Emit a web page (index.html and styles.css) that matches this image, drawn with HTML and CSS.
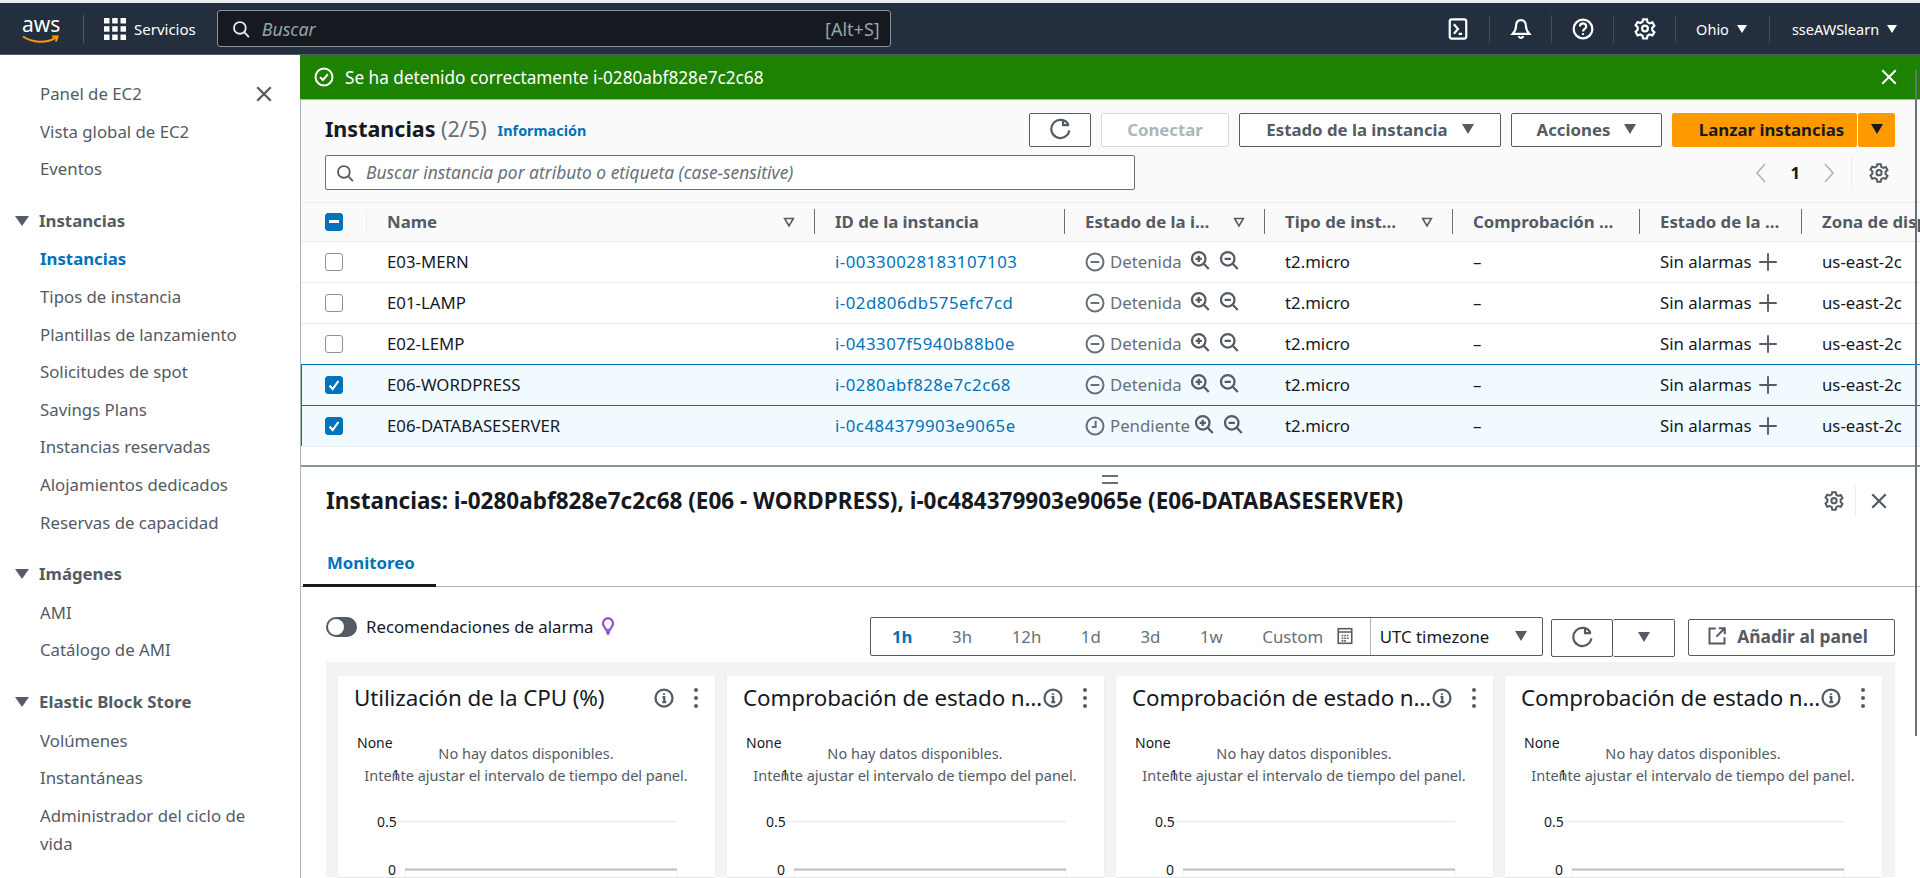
FILE: index.html
```html
<!DOCTYPE html>
<html lang="es">

<head>
    <meta charset="UTF-8">
    <title>Instancias | EC2</title>
    <link rel="stylesheet" href="styles.css">
</head>

<body>
    <svg class="sprite" xmlns="http://www.w3.org/2000/svg">
        <symbol id="i-search" viewBox="0 0 16 16"><circle cx="7" cy="7" r="5.2"/><path d="M11 11l4 4.2"/></symbol>
        <symbol id="i-refresh" viewBox="0 0 16 16"><path d="M10.2 1v4.2h4.3"/><path d="M14.2 5A6.6 6.6 0 1 0 14.8 9"/></symbol>
        <symbol id="i-gear" viewBox="0 0 16 16"><path d="M6.6 1h2.8l.4 2 1.6.9 2-.7 1.4 2.4-1.5 1.4v1.9l1.5 1.4-1.4 2.4-2-.7-1.6.9-.4 2H6.6l-.4-2-1.6-.9-2 .7L1.2 10l1.5-1.4V6.7L1.2 5.3l1.4-2.4 2 .7 1.6-.9z"/><circle cx="8" cy="7.7" r="2.1"/></symbol>
        <symbol id="i-close" viewBox="0 0 16 16"><path d="M2 2l12 12M14 2L2 14"/></symbol>
        <symbol id="i-terminal" viewBox="0 0 16 16"><rect x="2" y="1" width="12" height="14" rx="1.5"/><path d="M5 4.5l3 3.5-3 3.5M8.5 11.5h2.5"/></symbol>
        <symbol id="i-bell" viewBox="0 0 16 16"><path d="M8 1.5c-2.4 0-3.6 2-3.6 4.4 0 2.6-.9 4-2.4 5.6h12c-1.500-1.600-2.400-3-2.400-5.600C11.600 3.500 10.400 1.500 8 1.500z"/><path d="M6.300 13.200a1.800 1.800 0 0 0 3.400 0"/></symbol>
        <symbol id="i-help" viewBox="0 0 16 16"><circle cx="8" cy="8" r="6.800"/><path d="M5.800 6.200c0-3 4.500-3 4.500-.1 0 1.800-2.300 1.800-2.300 3.700M8 11v1.400"/></symbol>
        <symbol id="i-check-circle" viewBox="0 0 16 16"><circle cx="8" cy="8" r="6.800"/><path d="M4.800 8.100l2.300 2.300 4-4.600"/></symbol>
        <symbol id="i-sort" viewBox="0 0 16 16"><path d="M3 4h10l-5 8.500z"/></symbol>
        <symbol id="i-zoom-in" viewBox="0 0 16 16"><circle cx="7" cy="7" r="5.400"/><path d="M11 11l4 4.200M4.500 7h5M7 4.500v5"/></symbol>
        <symbol id="i-zoom-out" viewBox="0 0 16 16"><circle cx="7" cy="7" r="5.400"/><path d="M11 11l4 4.200M4.500 7h5"/></symbol>
        <symbol id="i-stopped" viewBox="0 0 16 16"><circle cx="8" cy="8" r="6.800"/><path d="M4.500 8h7"/></symbol>
        <symbol id="i-pending" viewBox="0 0 16 16"><circle cx="8" cy="8" r="6.800"/><path d="M8.500 3.800v5H5.500"/></symbol>
        <symbol id="i-plus" viewBox="0 0 16 16"><path d="M8 1v14M1 8h14"/></symbol>
        <symbol id="i-external" viewBox="0 0 16 16"><path d="M7 2H2v12h12V9M9.500 1.800h4.700v4.700M14 2L7.500 8.500"/></symbol>
        <symbol id="i-calendar" viewBox="0 0 16 16"><rect x="2" y="1.500" width="12" height="13"/><path d="M2 4.500h12M5 7.500h1.500M7.300 7.500h1.500M9.600 7.500h1.500M5 10h1.500M7.300 10h1.500M9.600 10h1.500M5 12.300h1.500M7.300 12.300h1.500"/></symbol>
        <symbol id="i-bulb" viewBox="0 0 16 16"><path d="M8 1.200a4.500 4.500 0 0 0-3 7.800c.6.700.9 1.300 1 2.300h4c.1-1 .4-1.600 1-2.300a4.500 4.500 0 0 0-3-7.800z"/><path d="M6.200 13.300h3.600M7 15h2"/></symbol>
        <symbol id="i-info" viewBox="0 0 16 16"><circle cx="8" cy="8" r="6.800"/><path d="M6.800 7.200H8.200V11.300M6.600 11.300h3.200M8 4.400v1.200"/></symbol>
    </svg>

    <div class="top-strip"></div>

    <header class="nav">
        <div class="nav-logo">
            <span class="nav-logo-text">aws</span>
            <svg class="nav-smile" viewBox="0 0 38 10"><path d="M1 1.500c9 6.500 24 7 33 1.200"/><path d="M30 1.500h5.500l-1.500 5"/></svg>
        </div>
        <span class="nav-divider"></span>
        <svg class="nav-grid" viewBox="0 0 22 22">
            <rect width="5.500" height="5.500"/><rect x="8.200" width="5.500" height="5.500"/><rect x="16.500" width="5.500" height="5.500"/>
            <rect y="8.200" width="5.500" height="5.500"/><rect x="8.200" y="8.200" width="5.500" height="5.500"/><rect x="16.500" y="8.200" width="5.500" height="5.500"/>
            <rect y="16.500" width="5.500" height="5.500"/><rect x="8.200" y="16.500" width="5.500" height="5.500"/><rect x="16.500" y="16.500" width="5.500" height="5.500"/>
        </svg>
        <span class="nav-services">Servicios</span>
        <div class="nav-search">
            <svg class="icon icon-18"><use href="#i-search"/></svg>
            <span class="nav-search-text">Buscar</span>
            <span class="nav-search-key">[Alt+S]</span>
        </div>
        <div class="nav-right">
            <span class="nav-item nav-item-first"><svg class="icon icon-22"><use href="#i-terminal"/></svg></span>
            <span class="nav-item"><svg class="icon icon-22"><use href="#i-bell"/></svg></span>
            <span class="nav-item"><svg class="icon icon-22"><use href="#i-help"/></svg></span>
            <span class="nav-item"><svg class="icon icon-22"><use href="#i-gear"/></svg></span>
            <span class="nav-item nav-item-region">Ohio <i class="caret caret-sm caret-white"></i></span>
            <span class="nav-item nav-item-user">sseAWSlearn <i class="caret caret-sm caret-white"></i></span>
        </div>
    </header>

    <div class="layout">
        <aside class="sidebar">
            <svg class="icon icon-18 sidebar-close"><use href="#i-close"/></svg>
            <a class="side-link">Panel de EC2</a>
            <a class="side-link">Vista global de EC2</a>
            <a class="side-link">Eventos</a>

            <div class="side-head"><i class="caret caret-side"></i>Instancias</div>
            <a class="side-link side-active">Instancias</a>
            <a class="side-link">Tipos de instancia</a>
            <a class="side-link">Plantillas de lanzamiento</a>
            <a class="side-link">Solicitudes de spot</a>
            <a class="side-link">Savings Plans</a>
            <a class="side-link">Instancias reservadas</a>
            <a class="side-link">Alojamientos dedicados</a>
            <a class="side-link">Reservas de capacidad</a>

            <div class="side-head"><i class="caret caret-side"></i>Imágenes</div>
            <a class="side-link">AMI</a>
            <a class="side-link">Catálogo de AMI</a>

            <div class="side-head"><i class="caret caret-side"></i>Elastic Block Store</div>
            <a class="side-link">Volúmenes</a>
            <a class="side-link">Instantáneas</a>
            <a class="side-link side-wrap">Administrador del ciclo de vida</a>
        </aside>

        <main class="main">
            <div class="banner">
                <svg class="icon icon-20"><use href="#i-check-circle"/></svg>
                <span class="banner-text">Se ha detenido correctamente i-0280abf828e7c2c68</span>
                <svg class="icon icon-18 banner-close"><use href="#i-close"/></svg>
            </div>

            <section class="toolbar">
                <div class="toolbar-row">
                    <h1 class="page-title">Instancias <span class="page-count">(2/5)</span></h1>
                    <a class="info-link">Información</a>
                    <div class="toolbar-actions">
                        <button class="btn btn-icon"><svg class="icon icon-22"><use href="#i-refresh"/></svg></button>
                        <button class="btn btn-disabled btn-connect">Conectar</button>
                        <button class="btn btn-state">Estado de la instancia <i class="caret"></i></button>
                        <button class="btn btn-actions">Acciones <i class="caret"></i></button>
                        <div class="btn-split">
                            <button class="btn btn-primary">Lanzar instancias</button>
                            <button class="btn btn-primary btn-primary-caret"><i class="caret caret-dark"></i></button>
                        </div>
                    </div>
                </div>
                <div class="toolbar-row toolbar-row-second">
                    <div class="filter">
                        <svg class="icon icon-18"><use href="#i-search"/></svg>
                        <span class="filter-text">Buscar instancia por atributo o etiqueta (case-sensitive)</span>
                    </div>
                    <div class="pager">
                        <svg class="pager-arrow" viewBox="0 0 12 20"><path d="M10 1L2 10l8 9"/></svg>
                        <span class="pager-num">1</span>
                        <svg class="pager-arrow" viewBox="0 0 12 20"><path d="M2 1l8 9-8 9"/></svg>
                        <span class="pager-gear"><svg class="icon icon-20"><use href="#i-gear"/></svg></span>
                    </div>
                </div>
            </section>

            <table class="grid">
                <colgroup>
                    <col class="col-check"><col class="col-name"><col class="col-id"><col class="col-state">
                    <col class="col-type"><col class="col-checks"><col class="col-alarm"><col class="col-zone">
                </colgroup>
                <thead>
                    <tr>
                        <th class="th-check"><span class="th-inner"><span class="checkbox checkbox-mixed"></span></span></th>
                        <th><span class="th-inner">Name<svg class="icon icon-14 sort"><use href="#i-sort"/></svg></span></th>
                        <th><span class="th-inner">ID de la instancia</span></th>
                        <th><span class="th-inner">Estado de la i…<svg class="icon icon-14 sort"><use href="#i-sort"/></svg></span></th>
                        <th><span class="th-inner">Tipo de inst…<svg class="icon icon-14 sort"><use href="#i-sort"/></svg></span></th>
                        <th><span class="th-inner">Comprobación …</span></th>
                        <th><span class="th-inner">Estado de la …</span></th>
                        <th><span class="th-inner th-last">Zona de disp</span></th>
                    </tr>
                </thead>
                <tbody>
                    <tr>
                        <td><span class="checkbox"></span></td><td>E03-MERN</td><td><a class="link">i-00330028183107103</a></td>
                        <td><span class="status"><svg class="icon icon-20"><use href="#i-stopped"/></svg>Detenida<svg class="icon zoom"><use href="#i-zoom-in"/></svg><svg class="icon zoom"><use href="#i-zoom-out"/></svg></span></td>
                        <td>t2.micro</td><td>–</td>
                        <td><span class="alarm">Sin alarmas<svg class="icon icon-20"><use href="#i-plus"/></svg></span></td><td>us-east-2c</td>
                    </tr>
                    <tr>
                        <td><span class="checkbox"></span></td><td>E01-LAMP</td><td><a class="link">i-02d806db575efc7cd</a></td>
                        <td><span class="status"><svg class="icon icon-20"><use href="#i-stopped"/></svg>Detenida<svg class="icon zoom"><use href="#i-zoom-in"/></svg><svg class="icon zoom"><use href="#i-zoom-out"/></svg></span></td>
                        <td>t2.micro</td><td>–</td>
                        <td><span class="alarm">Sin alarmas<svg class="icon icon-20"><use href="#i-plus"/></svg></span></td><td>us-east-2c</td>
                    </tr>
                    <tr>
                        <td><span class="checkbox"></span></td><td>E02-LEMP</td><td><a class="link">i-043307f5940b88b0e</a></td>
                        <td><span class="status"><svg class="icon icon-20"><use href="#i-stopped"/></svg>Detenida<svg class="icon zoom"><use href="#i-zoom-in"/></svg><svg class="icon zoom"><use href="#i-zoom-out"/></svg></span></td>
                        <td>t2.micro</td><td>–</td>
                        <td><span class="alarm">Sin alarmas<svg class="icon icon-20"><use href="#i-plus"/></svg></span></td><td>us-east-2c</td>
                    </tr>
                    <tr class="selected">
                        <td><span class="checkbox checkbox-on"><svg viewBox="0 0 18 18"><path d="M4 9.500l3.500 4L14 4.500"/></svg></span></td><td>E06-WORDPRESS</td><td><a class="link">i-0280abf828e7c2c68</a></td>
                        <td><span class="status"><svg class="icon icon-20"><use href="#i-stopped"/></svg>Detenida<svg class="icon zoom"><use href="#i-zoom-in"/></svg><svg class="icon zoom"><use href="#i-zoom-out"/></svg></span></td>
                        <td>t2.micro</td><td>–</td>
                        <td><span class="alarm">Sin alarmas<svg class="icon icon-20"><use href="#i-plus"/></svg></span></td><td>us-east-2c</td>
                    </tr>
                    <tr class="selected">
                        <td><span class="checkbox checkbox-on"><svg viewBox="0 0 18 18"><path d="M4 9.500l3.500 4L14 4.500"/></svg></span></td><td>E06-DATABASESERVER</td><td><a class="link">i-0c484379903e9065e</a></td>
                        <td><span class="status status-pending"><svg class="icon icon-20"><use href="#i-pending"/></svg>Pendiente<svg class="icon zoom"><use href="#i-zoom-in"/></svg><svg class="icon zoom"><use href="#i-zoom-out"/></svg></span></td>
                        <td>t2.micro</td><td>–</td>
                        <td><span class="alarm">Sin alarmas<svg class="icon icon-20"><use href="#i-plus"/></svg></span></td><td>us-east-2c</td>
                    </tr>
                </tbody>
            </table>

            <div class="table-rest"></div>

            <section class="details">
                <div class="drag-handle"></div>
                <div class="details-head">
                    <h2 class="details-title">Instancias: i-0280abf828e7c2c68 (E06 - WORDPRESS), i-0c484379903e9065e (E06-DATABASESERVER)</h2>
                    <svg class="icon icon-20 details-gear"><use href="#i-gear"/></svg>
                    <span class="details-sep"></span>
                    <svg class="icon icon-18 details-close"><use href="#i-close"/></svg>
                </div>
                <div class="tabs"><span class="tab tab-active">Monitoreo</span></div>

                <div class="monitor-bar">
                    <span class="toggle"></span>
                    <span class="toggle-label">Recomendaciones de alarma</span>
                    <svg class="icon icon-18 bulb"><use href="#i-bulb"/></svg>
                    <div class="range">
                        <span class="range-opt range-on">1h</span>
                        <span class="range-opt">3h</span>
                        <span class="range-opt">12h</span>
                        <span class="range-opt">1d</span>
                        <span class="range-opt">3d</span>
                        <span class="range-opt">1w</span>
                        <span class="range-opt range-custom">Custom<svg class="icon icon-18"><use href="#i-calendar"/></svg></span>
                        <span class="range-zone">UTC timezone<i class="caret"></i></span>
                    </div>
                    <div class="btn-pair">
                        <button class="btn btn-small"><svg class="icon icon-22"><use href="#i-refresh"/></svg></button>
                        <button class="btn btn-small"><i class="caret"></i></button>
                    </div>
                    <button class="btn btn-add"><svg class="icon icon-20"><use href="#i-external"/></svg>Añadir al panel</button>
                </div>

                <div class="dashboard">
                    <article class="card">
                        <div class="card-head">
                            <span class="card-title">Utilización de la CPU (%)</span>
                            <svg class="icon icon-20"><use href="#i-info"/></svg>
                            <span class="dots"></span>
                        </div>
                        <svg class="chart" viewBox="0 0 377 160">
                            <path class="chart-grid" d="M60 32.500h279M60 78.500h279"/>
                            <path class="chart-tick" d="M67 126v8M339 126v8"/>
                            <path class="chart-axis" d="M67 126.500h272"/>
                            <text class="chart-y" x="19" y="5">None</text>
                            <text class="chart-y" x="54" y="37">1</text>
                            <text class="chart-y" x="39" y="84">0.5</text>
                            <text class="chart-y" x="50" y="132">0</text>
                            <text class="chart-msg" x="188" y="16">No hay datos disponibles.</text>
                            <text class="chart-msg" x="188" y="38">Intente ajustar el intervalo de tiempo del panel.</text>
                        </svg>
                    </article>
                    <article class="card">
                        <div class="card-head">
                            <span class="card-title">Comprobación de estado n…</span>
                            <svg class="icon icon-20"><use href="#i-info"/></svg>
                            <span class="dots"></span>
                        </div>
                        <svg class="chart" viewBox="0 0 377 160">
                            <path class="chart-grid" d="M60 32.500h279M60 78.500h279"/>
                            <path class="chart-tick" d="M67 126v8M339 126v8"/>
                            <path class="chart-axis" d="M67 126.500h272"/>
                            <text class="chart-y" x="19" y="5">None</text>
                            <text class="chart-y" x="54" y="37">1</text>
                            <text class="chart-y" x="39" y="84">0.5</text>
                            <text class="chart-y" x="50" y="132">0</text>
                            <text class="chart-msg" x="188" y="16">No hay datos disponibles.</text>
                            <text class="chart-msg" x="188" y="38">Intente ajustar el intervalo de tiempo del panel.</text>
                        </svg>
                    </article>
                    <article class="card">
                        <div class="card-head">
                            <span class="card-title">Comprobación de estado n…</span>
                            <svg class="icon icon-20"><use href="#i-info"/></svg>
                            <span class="dots"></span>
                        </div>
                        <svg class="chart" viewBox="0 0 377 160">
                            <path class="chart-grid" d="M60 32.500h279M60 78.500h279"/>
                            <path class="chart-tick" d="M67 126v8M339 126v8"/>
                            <path class="chart-axis" d="M67 126.500h272"/>
                            <text class="chart-y" x="19" y="5">None</text>
                            <text class="chart-y" x="54" y="37">1</text>
                            <text class="chart-y" x="39" y="84">0.5</text>
                            <text class="chart-y" x="50" y="132">0</text>
                            <text class="chart-msg" x="188" y="16">No hay datos disponibles.</text>
                            <text class="chart-msg" x="188" y="38">Intente ajustar el intervalo de tiempo del panel.</text>
                        </svg>
                    </article>
                    <article class="card">
                        <div class="card-head">
                            <span class="card-title">Comprobación de estado n…</span>
                            <svg class="icon icon-20"><use href="#i-info"/></svg>
                            <span class="dots"></span>
                        </div>
                        <svg class="chart" viewBox="0 0 377 160">
                            <path class="chart-grid" d="M60 32.500h279M60 78.500h279"/>
                            <path class="chart-tick" d="M67 126v8M339 126v8"/>
                            <path class="chart-axis" d="M67 126.500h272"/>
                            <text class="chart-y" x="19" y="5">None</text>
                            <text class="chart-y" x="54" y="37">1</text>
                            <text class="chart-y" x="39" y="84">0.5</text>
                            <text class="chart-y" x="50" y="132">0</text>
                            <text class="chart-msg" x="188" y="16">No hay datos disponibles.</text>
                            <text class="chart-msg" x="188" y="38">Intente ajustar el intervalo de tiempo del panel.</text>
                        </svg>
                    </article>
                </div>
            </section>

            <div class="scroll-thumb"></div>
        </main>
    </div>
</body>

</html>
```

FILE: styles.css
```css
* {
    box-sizing: border-box;
}

html,
body {
    height: 878px;
    margin: 0;
    overflow: hidden;
}

body {
    font-family: "Noto Sans", "Open Sans", sans-serif;
    font-size: 16px;
    color: #16191f;
    background-color: #fff;
}

h1,
h2 {
    margin: 0;
}

.sprite {
    display: none;
}

.icon {
    flex: none;
    fill: none;
    stroke: currentColor;
    stroke-width: 1.6;
}

.icon-14 { width: 14px; height: 14px; }
.icon-16 { width: 16px; height: 16px; }
.icon-18 { width: 18px; height: 18px; }
.icon-20 { width: 20px; height: 20px; }
.icon-22 { width: 22px; height: 22px; }

.caret {
    display: inline-block;
    width: 0;
    height: 0;
    border-left: 6.5px solid transparent;
    border-right: 6.5px solid transparent;
    border-top: 10px solid #545b64;
}

.caret-sm {
    border-left-width: 5px;
    border-right-width: 5px;
    border-top-width: 8px;
}

.caret-white {
    border-top-color: #fff;
}

.caret-dark {
    border-top-color: #16191f;
}

.caret-side {
    position: absolute;
    left: 15px;
    top: 14px;
    border-left-width: 7px;
    border-right-width: 7px;
    border-top-width: 10px;
}

/* top nav */
.top-strip {
    height: 3px;
    background-color: #eaeded;
}

.nav {
    display: flex;
    align-items: center;
    height: 52px;
    padding-left: 22px;
    color: #fff;
    background-color: #232f3e;
    border-bottom: 1px solid #545b64;
}

.nav-logo {
    position: relative;
    width: 38px;
    height: 34px;
}

.nav-logo-text {
    display: block;
    font-size: 21px;
    line-height: 24px;
    text-align: center;
}

.nav-smile {
    position: absolute;
    left: 0;
    top: 23px;
    width: 38px;
    height: 10px;
    fill: none;
    stroke: #f90;
    stroke-width: 2;
}

.nav-divider {
    width: 1px;
    height: 28px;
    margin: 0 20px 0 23px;
    background-color: #545b64;
}

.nav-grid {
    width: 22px;
    height: 22px;
    fill: #fff;
}

.nav-services {
    margin-left: 8px;
    font-size: 15px;
}

.nav-search {
    display: flex;
    align-items: center;
    gap: 12px;
    width: 674px;
    height: 37px;
    margin-left: 21px;
    padding: 0 10px 0 14px;
    color: #eaeded;
    background-color: #16191f;
    border: 1px solid #879596;
    border-radius: 3px;
}

.nav-search-text {
    font-size: 17.8px;
    font-style: italic;
    color: #95a5a6;
}

.nav-search-key {
    margin-left: auto;
    font-size: 18px;
    color: #95a5a6;
}

.nav-right {
    display: flex;
    margin-left: auto;
    padding-right: 1px;
}

.nav-item {
    display: flex;
    align-items: center;
    justify-content: center;
    gap: 6px;
    width: 62px;
    height: 28px;
    font-size: 14.5px;
    border-left: 1px solid #414d5c;
}

.nav-item-first {
    border-left: none;
}

.nav-item-region {
    gap: 8px;
    width: 94px;
    padding-right: 2px;
}

.nav-item-user {
    gap: 8px;
    width: 150px;
}

/* page layout */
.layout {
    display: flex;
    height: 823px;
}

.sidebar {
    position: relative;
    flex: none;
    width: 300px;
    padding-top: 20px;
    color: #545b64;
    background-color: #fff;
}

.sidebar-close {
    position: absolute;
    left: 255px;
    top: 30px;
    color: #545b64;
    stroke-width: 2;
}

.side-link {
    display: block;
    padding-left: 40px;
    font-size: 16.8px;
    line-height: 37.6px;
}

.side-active {
    font-weight: 700;
    color: #0073bb;
}

.side-wrap {
    width: 280px;
    line-height: 28px;
    padding-top: 5px;
}

.side-head {
    position: relative;
    margin-top: 14px;
    margin-bottom: 1px;
    padding-left: 39px;
    font-size: 16.8px;
    font-weight: 700;
    line-height: 37.6px;
}

.main {
    position: relative;
    flex: 1;
    min-width: 0;
    display: flex;
    flex-direction: column;
    border-left: 1px solid #aab7b8;
    background-color: #fff;
}

.scroll-thumb {
    position: absolute;
    right: 3px;
    top: 15px;
    width: 2px;
    height: 666px;
    background-color: #687078;
}

/* flash */
.banner {
    display: flex;
    align-items: center;
    flex: none;
    height: 45px;
    margin-left: -1px;
    padding: 0 22px 0 14px;
    color: #fff;
    background-color: #1d8102;
    border-bottom: 1px solid #aab7b8;
}

.banner-text {
    margin-left: 11px;
    font-size: 17.2px;
}

.banner-close {
    margin-left: auto;
    stroke-width: 1.8;
}

/* toolbar */
.toolbar {
    flex: none;
    height: 103px;
    padding: 13px 25px 0 24px;
    background-color: #fafafa;
    border-bottom: 1px solid #eaeded;
}

.toolbar-row {
    display: flex;
    align-items: center;
    height: 34px;
}

.toolbar-row-second {
    height: 35px;
    margin-top: 8px;
}

.page-title {
    margin-top: -3px;
    font-size: 21.5px;
    font-weight: 700;
}

.page-count {
    font-weight: 400;
    color: #687078;
}

.info-link {
    margin-left: 11px;
    font-size: 14.4px;
    font-weight: 700;
    color: #0073bb;
}

.toolbar-actions {
    display: flex;
    gap: 10px;
    margin-left: auto;
}

.btn {
    display: flex;
    align-items: center;
    justify-content: center;
    gap: 14px;
    height: 34px;
    padding: 0 0 2px;
    font-family: inherit;
    font-size: 16.8px;
    font-weight: 700;
    color: #545b64;
    background-color: #fff;
    border: 1px solid #545b64;
    border-radius: 2px;
}

.btn-icon {
    width: 62px;
}

.btn-connect {
    width: 128px;
}

.btn-state {
    width: 262px;
}

.btn-actions {
    width: 151px;
}

.btn-disabled {
    color: #aab7b8;
    border-color: #d5dbdb;
}

.btn-split {
    display: flex;
    gap: 1px;
}

.btn-primary {
    width: 185px;
    padding-left: 14px;
    color: #16191f;
    background-color: #f90;
    border-color: #f90;
}

.btn-primary-caret {
    width: 37px;
    padding-left: 0;
}

.filter {
    display: flex;
    align-items: center;
    gap: 12px;
    width: 810px;
    height: 35px;
    padding-left: 10px;
    color: #545b64;
    background-color: #fff;
    border: 1px solid #687078;
    border-radius: 2px;
}

.filter-text {
    padding-bottom: 2px;
    font-size: 17.4px;
    font-style: italic;
    color: #687078;
}

.pager {
    display: flex;
    align-items: center;
    margin-left: auto;
    padding-right: 6px;
    color: #545b64;
}

.pager-arrow {
    width: 12px;
    height: 20px;
    fill: none;
    stroke: #aab7b8;
    stroke-width: 1.6;
}

.pager-num {
    margin: 0 23px;
    font-size: 16.8px;
    font-weight: 700;
    color: #16191f;
}

.pager-gear {
    display: flex;
    align-items: center;
    height: 35px;
    margin-left: 16px;
    padding-left: 17px;
    border-left: 1px solid #eaeded;
}

/* table */
.grid {
    flex: none;
    width: 1619px;
    table-layout: fixed;
    border-collapse: collapse;
    font-size: 16.8px;
}

.col-check { width: 66px; }
.col-name { width: 448px; }
.col-id { width: 250px; }
.col-state { width: 200px; }
.col-type { width: 188px; }
.col-checks { width: 187px; }
.col-alarm { width: 162px; }
.col-zone { width: 118px; }

.grid th {
    height: 38px;
    padding: 0;
    font-weight: 700;
    text-align: left;
    color: #545b64;
    background-color: #fafafa;
    border-bottom: 1px solid #eaeded;
}

.th-inner {
    display: flex;
    align-items: center;
    height: 25px;
    padding: 0 8px 0 20px;
    white-space: nowrap;
    border-right: 1px solid #687078;
}

.th-check .th-inner {
    padding: 0 0 0 24px;
    border-right-color: #eaeded;
}

.th-last {
    border-right: none;
    padding-right: 0;
}

.sort {
    margin-left: auto;
    margin-right: 10px;
    color: #545b64;
    stroke-width: 1.8;
}

.grid td {
    height: 41px;
    padding: 0 0 0 20px;
    white-space: nowrap;
    overflow: hidden;
    border-bottom: 1px solid #eaeded;
}

.grid td:first-child {
    padding-left: 24px;
}

.grid tr:has(+ .selected) td {
    border-bottom-color: #0073bb;
}

.grid tr.selected td {
    background-color: #f1faff;
    border-bottom: 1px solid #0073bb;
}

.grid tr.selected td:first-child {
    box-shadow: inset 1px 0 0 #0073bb;
}

.grid tr.selected:last-child td {
    border-bottom: 1px solid #eaeded;
}

.checkbox {
    display: block;
    width: 18px;
    height: 18px;
    background-color: #fff;
    border: 1px solid #879596;
    border-radius: 3px;
}

.checkbox-on,
.checkbox-mixed {
    position: relative;
    background-color: #0073bb;
    border-color: #0073bb;
}

.checkbox-on svg {
    display: block;
    width: 16px;
    height: 16px;
    fill: none;
    stroke: #fff;
    stroke-width: 2.4;
}

.checkbox-mixed::after {
    content: "";
    position: absolute;
    left: 3px;
    top: 6px;
    width: 10px;
    height: 3px;
    background-color: #fff;
}

.link {
    letter-spacing: 0.5px;
    color: #0073bb;
}

.status {
    display: flex;
    align-items: center;
    color: #687078;
}

.status .icon-20 {
    margin-right: 5px;
}

.zoom {
    width: 20px;
    height: 20px;
    margin: -4px 0 0 8px;
    color: #545b64;
    stroke-width: 1.8;
}

.zoom + .zoom {
    margin-left: 9px;
}

.status-pending .zoom {
    margin-left: 4px;
}

.status-pending .zoom + .zoom {
    margin-left: 9px;
}

.alarm {
    display: flex;
    align-items: center;
    gap: 6px;
}

.alarm .icon {
    color: #545b64;
    stroke-width: 1.5;
}

.table-rest {
    flex: none;
    height: 20px;
    border-bottom: 2px solid #879596;
}

/* split panel */
.details {
    position: relative;
    flex: 1;
    min-height: 0;
    overflow: hidden;
}

.drag-handle {
    position: absolute;
    left: 801px;
    top: 8px;
    width: 16px;
    height: 9px;
    border-top: 2px solid #687078;
    border-bottom: 2px solid #687078;
}

.details-head {
    display: flex;
    align-items: center;
    height: 71px;
    padding: 0 32px 3px 25px;
}

.details-title {
    font-size: 22.5px;
    font-weight: 700;
    white-space: nowrap;
}

.details-gear {
    margin-left: auto;
    color: #545b64;
}

.details-sep {
    width: 1px;
    height: 30px;
    margin: 0 14px 0 11px;
    background-color: #eaeded;
}

.details-close {
    color: #545b64;
    stroke-width: 2;
}

.tabs {
    height: 49px;
    border-bottom: 1px solid #aab7b8;
}

.tab {
    display: inline-block;
    height: 49px;
    padding: 0 24px 0 24px;
    font-size: 16.8px;
    font-weight: 700;
    line-height: 50px;
}

.tab-active {
    width: 133px;
    margin-left: 2px;
    color: #0073bb;
    border-bottom: 3px solid #16191f;
}

.monitor-bar {
    display: flex;
    align-items: flex-start;
    height: 75px;
    padding: 30px 25px 0 25px;
}

.toggle {
    position: relative;
    flex: none;
    width: 31px;
    height: 20px;
    background-color: #545b64;
    border-radius: 10px;
}

.toggle::after {
    content: "";
    position: absolute;
    left: 2px;
    top: 2px;
    width: 16px;
    height: 16px;
    background-color: #fff;
    border-radius: 50%;
}

.toggle-label {
    margin-left: 9px;
    font-size: 16.8px;
    line-height: 20px;
    color: #16191f;
}

.bulb {
    margin: 0 0 0 5px;
    color: #8a4fd1;
    stroke-width: 1.8;
}

.range {
    display: flex;
    align-items: center;
    gap: 39.6px;
    width: 673px;
    height: 39px;
    margin-left: auto;
    margin-right: 8px;
    padding-left: 21px;
    color: #687078;
    font-size: 16.8px;
    border: 1px solid #545b64;
    border-radius: 2px;
}

.range-on {
    font-weight: 700;
    color: #0073bb;
}

.range-custom {
    display: flex;
    align-items: center;
    gap: 13px;
    color: #687078;
}

.range-custom .icon {
    color: #545b64;
    stroke-width: 1.4;
}

.range-zone {
    display: flex;
    flex: none;
    align-items: center;
    justify-content: space-between;
    width: 169px;
    height: 37px;
    margin-left: -24px;
    padding: 0 12px 0 9px;
    color: #16191f;
    border-left: 1px solid #aab7b8;
}

.btn-pair {
    display: flex;
    margin-top: 2px;
}

.btn-small {
    width: 62px;
    height: 38px;
}

.btn-small + .btn-small {
    border-left: none;
}

.btn-add {
    gap: 10px;
    width: 207px;
    height: 37px;
    margin: 2px 0 0 13px;
    padding-right: 8px;
    font-size: 17.4px;
}

.dashboard {
    display: flex;
    gap: 12px;
    height: 215px;
    margin: 0 25px;
    padding: 14px 13px 0 12px;
    background-color: #f2f3f3;
}

.card {
    flex: 1;
    min-width: 0;
    padding-top: 0;
    background-color: #fff;
    box-shadow: 0 1px 1px rgba(0, 28, 36, 0.1);
}

.card-head {
    display: flex;
    align-items: center;
    height: 44px;
    padding: 0 17px 0 16px;
    color: #545b64;
}

.card-head .icon {
    stroke-width: 1.8;
}

.card-title {
    flex: 1;
    min-width: 0;
    font-size: 22.4px;
    letter-spacing: -0.1px;
    color: #16191f;
    white-space: nowrap;
}

.dots {
    flex: none;
    width: 4px;
    height: 4px;
    margin-left: 20px;
    border-radius: 50%;
    background-color: #545b64;
    box-shadow: 0 -8px 0 #545b64, 0 8px 0 #545b64;
}

.chart {
    display: block;
    width: 377px;
    height: 160px;
    margin-top: 23px;
    overflow: visible;
}

.chart-grid {
    fill: none;
    stroke: #eaeded;
    stroke-width: 1.5;
}

.chart-tick {
    fill: none;
    stroke: #eaeded;
    stroke-width: 1;
}

.chart-axis {
    fill: none;
    stroke: #bbb;
    stroke-width: 2;
}

.chart-y {
    font-size: 14px;
    fill: #16191f;
}

.chart-msg {
    font-size: 14.5px;
    fill: #545b64;
    text-anchor: middle;
}
```
